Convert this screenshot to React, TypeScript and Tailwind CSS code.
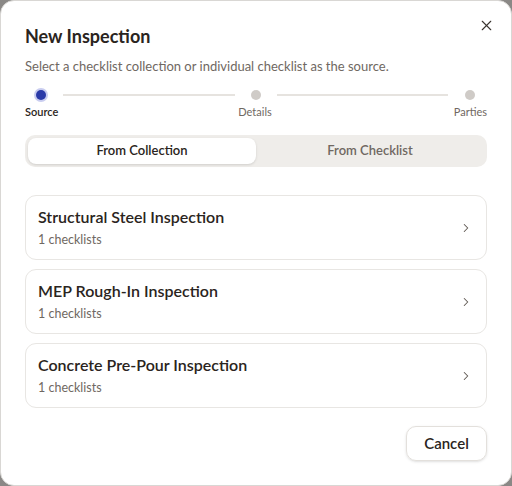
import { X, ChevronRight } from 'lucide-react';

const collections = [
  { name: 'Structural Steel Inspection', count: 1 },
  { name: 'MEP Rough-In Inspection', count: 1 },
  { name: 'Concrete Pre-Pour Inspection', count: 1 },
];

function Stepper() {
  return (
    <div className="mt-[13px]">
      <div className="flex items-center h-[14px]">
        <div className="w-[14px] h-[14px] rounded-full bg-[#c9cdf0] flex items-center justify-center ml-[9px]">
          <div className="w-[10px] h-[10px] rounded-full bg-[#2b3ba8]" />
        </div>
        <div className="flex-1 h-[2px] bg-[#e6e3df] ml-[15px] mr-[16px]" />
        <div className="w-[10px] h-[10px] rounded-full bg-[#cfcbc7]" />
        <div className="flex-1 h-[2px] bg-[#e6e3df] ml-[16px] mr-[17px]" />
        <div className="w-[10px] h-[10px] rounded-full bg-[#cfcbc7] mr-[12px]" />
      </div>
      <div className="flex justify-between mt-[3px] text-[11px] leading-[14px]">
        <span className="font-semibold text-[#2a2420]">Source</span>
        <span className="text-[#6f6862] translate-x-[-1px]">Details</span>
        <span className="text-[#6f6862]">Parties</span>
      </div>
    </div>
  );
}

export default function App() {
  return (
    <div className="w-[512px] h-[486px] bg-[#8a8886]" style={{ fontFamily: 'Lato, "Noto Sans", sans-serif' }}>
      <div className="relative w-full h-full bg-white rounded-[14px] border border-[#d9d7d4] px-[24px] pt-[23px] text-[#2a2420]">
        <button className="absolute top-[16px] right-[16px] text-[#3a3430]">
          <X size={17} strokeWidth={1.6} />
        </button>
        <h2 className="text-[18px] leading-[24px] font-bold">New Inspection</h2>
        <p className="mt-[9px] text-[13px] leading-[18px] text-[#6f6862]">
          Select a checklist collection or individual checklist as the source.
        </p>
        <Stepper />
        <div className="mt-[16px] h-[32px] rounded-[10px] bg-[#efedea] p-[3px] flex">
          <button className="flex-1 rounded-[8px] bg-white shadow-sm text-[13px] font-semibold text-[#2a2420]">
            From Collection
          </button>
          <button className="flex-1 rounded-[8px] text-[13px] font-semibold text-[#6f6862]">
            From Checklist
          </button>
        </div>
        <div className="mt-[28px] flex flex-col gap-[9px]">
          {collections.map((c) => (
            <div
              key={c.name}
              className="h-[65px] rounded-[11px] border border-[#e8e6e3] pl-[12px] pr-[13px] flex items-center justify-between"
            >
              <div>
                <div className="text-[16px] leading-[20px] font-semibold text-[#2a2420]">{c.name}</div>
                <div className="mt-[5px] text-[12.5px] leading-[16px] text-[#6f6862]">{c.count} checklists</div>
              </div>
              <ChevronRight size={14} strokeWidth={1.8} className="text-[#5f5852]" />
            </div>
          ))}
        </div>
        <div className="mt-[18px] flex justify-end">
          <button className="h-[35px] w-[81px] rounded-[10px] border border-[#e3e0dc] shadow-sm text-[15px] font-semibold text-[#2a2420]">
            Cancel
          </button>
        </div>
      </div>
    </div>
  );
}
